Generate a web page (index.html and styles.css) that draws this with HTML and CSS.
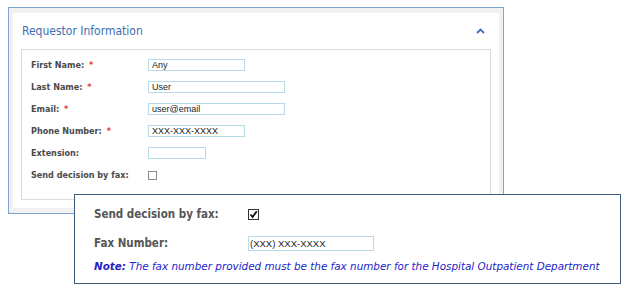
FILE: index.html
```html
<!DOCTYPE html>
<html lang="en">
    <head>
        <meta charset="UTF-8">
        <meta name="viewport" content="width=device-width, initial-scale=1.0">
        <title>Requestor Information</title>
        <link rel="stylesheet" href="styles.css">
    </head>
    <body>
        <div class="panel">
            <div class="card">
                <div class="card-head">
                    <h3>Requestor Information</h3>
                    <svg class="chevron" width="9" height="6" viewBox="0 0 9 6">
                        <path d="M1 5 L4.5 1.5 L8 5" fill="none" stroke="#3a70b8" stroke-width="1.8"/>
                    </svg>
                </div>
                <div class="fields">
                    <div class="row">
                        <label>First Name: <span class="req">*</span></label>
                        <input class="w-short" type="text" value="Any">
                    </div>
                    <div class="row">
                        <label>Last Name: <span class="req">*</span></label>
                        <input class="w-long" type="text" value="User">
                    </div>
                    <div class="row">
                        <label>Email: <span class="req">*</span></label>
                        <input class="w-long" type="text" value="user@email">
                    </div>
                    <div class="row">
                        <label>Phone Number: <span class="req">*</span></label>
                        <input class="w-short" type="text" value="XXX-XXX-XXXX">
                    </div>
                    <div class="row">
                        <label>Extension:</label>
                        <input class="w-tiny" type="text">
                    </div>
                    <div class="row">
                        <label>Send decision by fax:</label>
                        <span class="box"></span>
                    </div>
                </div>
            </div>
        </div>

        <div class="zoom">
            <div class="zrow">
                <label>Send decision by fax:</label>
                <span class="box checked">
                    <svg width="9" height="9" viewBox="0 0 9 9">
                        <path d="M1.5 4.5 L3.6 7 L7.8 1.2" fill="none" stroke="#111" stroke-width="1.8"/>
                    </svg>
                </span>
            </div>
            <div class="zrow">
                <label>Fax Number:</label>
                <input class="fax" type="text" value="(XXX) XXX-XXXX">
            </div>
            <p class="note"><b>Note:</b> The fax number provided must be the fax number for the Hospital Outpatient Department</p>
        </div>
    </body>
</html>
```

FILE: styles.css
```css
body {
    margin: 0;
    background: #ffffff;
    font-family: "DejaVu Sans Condensed", "DejaVu Sans", sans-serif;
}
.panel {
    width: 486px;
    margin: 7px 0 0 8px;
    padding: 5px 4px;
    border: 1px solid #7ea2d2;
    background: #f1f1f1;
}
.card {
    background: #ffffff;
    padding: 0 8px 8px 8px;
    height: 187px;
}
.card-head {
    display: flex;
    align-items: center;
    justify-content: space-between;
    height: 36px;
    padding: 0 6px 0 1px;
}
.card-head h3 {
    margin: 0;
    font-size: 12px;
    font-weight: normal;
    color: #3b6fb2;
}
.fields {
    border: 1px solid #dcdcdc;
    padding: 4px 9px 0 9px;
    height: 145px;
}
.row {
    display: flex;
    align-items: center;
    height: 22px;
}
.row label {
    width: 117px;
    font-size: 9px;
    font-weight: bold;
    color: #4a4a4a;
}
.req {
    color: #e23a3a;
    margin-left: 2px;
}
input {
    box-sizing: border-box;
    height: 12px;
    padding: 0 3px;
    border: 1px solid #b7dbe6;
    font-family: "Liberation Sans", Arial, sans-serif;
    font-size: 9px;
    color: #222;
    outline: none;
}
.w-short {
    width: 97px;
}
.w-long {
    width: 137px;
}
.w-tiny {
    width: 58px;
}
.box {
    box-sizing: border-box;
    display: inline-block;
    width: 9px;
    height: 9px;
    border: 1px solid #8a8a8a;
    background: #fff;
}
.zoom {
    position: absolute;
    left: 74px;
    top: 194px;
    width: 526px;
    height: 88px;
    padding: 0 0 0 19px;
    border: 1px solid #3d5c7e;
    background: #ffffff;
}
.zrow {
    display: flex;
    align-items: center;
    height: 20px;
}
.zrow:first-child {
    height: 38px;
}
.zrow label {
    width: 154px;
    font-size: 11.5px;
    font-weight: bold;
    color: #555555;
}
.box.checked {
    width: 11px;
    height: 11px;
    border: 1px solid #333;
    display: flex;
    align-items: center;
    justify-content: center;
}
.fax {
    width: 126px;
    height: 15px;
    padding: 0 1px;
    font-size: 9.5px;
}
.note {
    margin: 7px 0 0 0;
    font-family: "DejaVu Sans", sans-serif;
    font-size: 10.4px;
    font-style: italic;
    color: #2323c8;
}
```
